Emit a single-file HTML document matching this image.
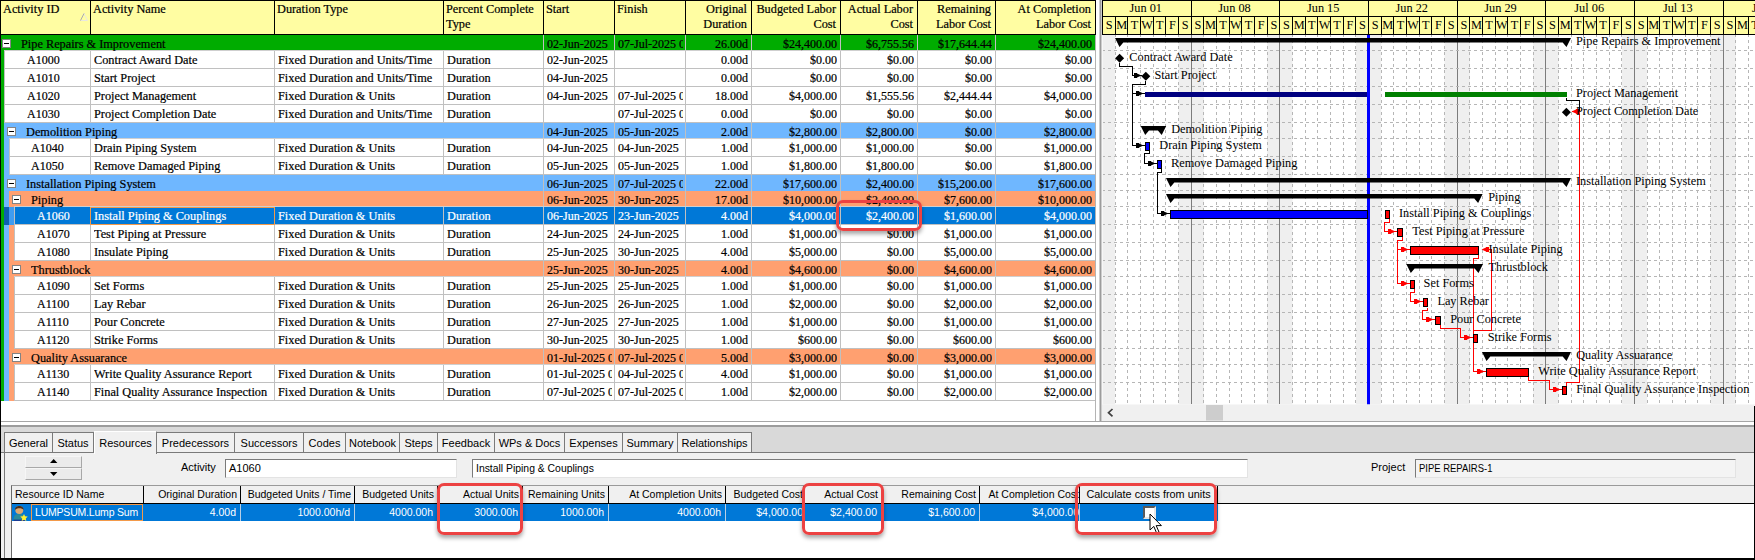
<!DOCTYPE html>
<html><head><meta charset="utf-8"><title>P6 Activities</title>
<style>
html,body{margin:0;padding:0}
body{width:1755px;height:560px;position:relative;overflow:hidden;background:#fff;font-family:"Liberation Serif",serif;font-size:12px;color:#000;-webkit-text-stroke:0.2px currentColor}
div,span{box-sizing:border-box}
.abs,.c,.h,.r,.t,.rc,.rh{position:absolute}
.c{height:17px;line-height:17px;margin-top:1px;white-space:nowrap;overflow:hidden;font-size:12.3px}
.n{font-size:12px}
.h{top:1px;height:33px;line-height:15px;padding-top:1px;white-space:nowrap;overflow:hidden;font-size:12.3px}
.R{text-align:right}
.r{left:0;width:1096px}
.sel .c{color:#fff}
.bx{position:absolute;width:9px;height:9px;background:#fff;border:1px solid #848484}
.bx:after{content:"";position:absolute;left:1px;top:3px;width:5px;height:1px;background:#000}
.sans,.sans *{font-family:"Liberation Sans",sans-serif;font-size:11px}
.t{top:432px;height:20px;line-height:21px;background:#f0f0f0;border:1px solid #7a7a7a;border-bottom:none;text-align:center;white-space:nowrap}
.rh{top:486px;height:17px;line-height:17px;white-space:nowrap;overflow:hidden;border-right:1px solid #000;background:#f0f0f0}
.rc{top:504px;height:17px;line-height:16px;white-space:nowrap;overflow:hidden;color:#fff;text-align:right;border-right:1px solid #b8cfe6}
.red{position:absolute;border:3px solid #ec4242;border-radius:7px;box-shadow:0 3px 4px rgba(0,0,0,.35)}
.inp{position:absolute;height:19px;line-height:17px;border:1px solid;border-color:#7a7a7a #e3e3e3 #e3e3e3 #7a7a7a;background:#fff;padding-left:3px;white-space:nowrap}
</style></head><body>

<div class="abs" style="left:0;top:0;width:1096px;height:35px;background:#000"></div>
<div class="h" style="left:1px;width:89px;background:#fffda2;padding-left:2px">Activity ID</div>
<div class="h" style="left:91px;width:183px;background:#fffda2;padding-left:2px">Activity Name</div>
<div class="h" style="left:275px;width:168px;background:#fffda2;padding-left:2px">Duration Type</div>
<div class="h" style="left:444px;width:99px;background:#fffda2;padding-left:2px">Percent Complete<br>Type</div>
<div class="h" style="left:544px;width:70px;background:#fffda2;padding-left:2px">Start</div>
<div class="h" style="left:615px;width:70px;background:#fffda2;padding-left:2px">Finish</div>
<div class="h R" style="left:686px;width:65px;background:#fffda2;padding-right:4px">Original<br>Duration</div>
<div class="h R" style="left:752px;width:88px;background:#fffda2;padding-right:4px">Budgeted Labor<br>Cost</div>
<div class="h R" style="left:841px;width:76px;background:#fffda2;padding-right:4px">Actual Labor<br>Cost</div>
<div class="h R" style="left:918px;width:77px;background:#fffda2;padding-right:4px">Remaining<br>Labor Cost</div>
<div class="h R" style="left:996px;width:99px;background:#fffda2;padding-right:4px">At Completion<br>Labor Cost</div>
<svg class="abs" style="left:79px;top:12px" width="10" height="10"><path d="M1.5 8.5 L5 1.5 L8.5 8.5 Z" fill="none" stroke="#e8e8e0" stroke-width="1"/><path d="M1.5 8.5 L5 1.5" fill="none" stroke="#b0b0a0" stroke-width="1"/></svg>
<div class="r" style="top:35px;height:16px">
<div class="abs" style="left:1px;top:0;width:1094px;height:16px;background:#00ac00;"></div>
<div class="abs" style="left:543px;top:0;width:1px;height:16px;background:#c0c0c0"></div>
<div class="abs" style="left:614px;top:0;width:1px;height:16px;background:#c0c0c0"></div>
<div class="abs" style="left:685px;top:0;width:1px;height:16px;background:#c0c0c0"></div>
<div class="abs" style="left:751px;top:0;width:1px;height:16px;background:#c0c0c0"></div>
<div class="abs" style="left:840px;top:0;width:1px;height:16px;background:#c0c0c0"></div>
<div class="abs" style="left:917px;top:0;width:1px;height:16px;background:#c0c0c0"></div>
<div class="abs" style="left:995px;top:0;width:1px;height:16px;background:#c0c0c0"></div>
<div class="abs" style="left:4px;top:15px;width:1091px;height:1px;background:#cfcfcf"></div>
<div class="bx" style="left:2px;top:4px"></div>
<div class="c" style="left:21px;top:0;width:500px">Pipe Repairs &amp; Improvement</div>
<div class="c n" style="left:547px;top:0;width:65px">02-Jun-2025</div>
<div class="c n" style="left:618px;top:0;width:65px">07-Jul-2025 0</div>
<div class="c n R" style="left:686px;top:0;width:62px">26.00d</div>
<div class="c n R" style="left:752px;top:0;width:85px">$24,400.00</div>
<div class="c n R" style="left:841px;top:0;width:73px">$6,755.56</div>
<div class="c n R" style="left:918px;top:0;width:74px">$17,644.44</div>
<div class="c n R" style="left:996px;top:0;width:96px">$24,400.00</div>
</div>
<div class="r" style="top:51px;height:18px">
<div class="abs" style="left:1px;top:0;width:3px;height:18px;background:#00ac00"></div>
<div class="abs" style="left:4px;top:0;width:1091px;height:18px;background:#fff;border-left:1px solid #c0c0c0;border-bottom:1px solid #c0c0c0"></div>
<div class="abs" style="left:90px;top:0;width:1px;height:18px;background:#c0c0c0"></div>
<div class="abs" style="left:274px;top:0;width:1px;height:18px;background:#c0c0c0"></div>
<div class="abs" style="left:443px;top:0;width:1px;height:18px;background:#c0c0c0"></div>
<div class="abs" style="left:543px;top:0;width:1px;height:18px;background:#c0c0c0"></div>
<div class="abs" style="left:614px;top:0;width:1px;height:18px;background:#c0c0c0"></div>
<div class="abs" style="left:685px;top:0;width:1px;height:18px;background:#c0c0c0"></div>
<div class="abs" style="left:751px;top:0;width:1px;height:18px;background:#c0c0c0"></div>
<div class="abs" style="left:840px;top:0;width:1px;height:18px;background:#c0c0c0"></div>
<div class="abs" style="left:917px;top:0;width:1px;height:18px;background:#c0c0c0"></div>
<div class="abs" style="left:995px;top:0;width:1px;height:18px;background:#c0c0c0"></div>
<div class="c n" style="left:27px;top:0;width:63px">A1000</div>
<div class="c" style="left:94px;top:0;width:178px">Contract Award Date</div>
<div class="c" style="left:278px;top:0;width:163px">Fixed Duration and Units/Time</div>
<div class="c" style="left:447px;top:0;width:94px">Duration</div>
<div class="c n" style="left:547px;top:0;width:65px">02-Jun-2025</div>
<div class="c n R" style="left:686px;top:0;width:62px">0.00d</div>
<div class="c n R" style="left:752px;top:0;width:85px">$0.00</div>
<div class="c n R" style="left:841px;top:0;width:73px">$0.00</div>
<div class="c n R" style="left:918px;top:0;width:74px">$0.00</div>
<div class="c n R" style="left:996px;top:0;width:96px">$0.00</div>
</div>
<div class="r" style="top:69px;height:18px">
<div class="abs" style="left:1px;top:0;width:3px;height:18px;background:#00ac00"></div>
<div class="abs" style="left:4px;top:0;width:1091px;height:18px;background:#fff;border-left:1px solid #c0c0c0;border-bottom:1px solid #c0c0c0"></div>
<div class="abs" style="left:90px;top:0;width:1px;height:18px;background:#c0c0c0"></div>
<div class="abs" style="left:274px;top:0;width:1px;height:18px;background:#c0c0c0"></div>
<div class="abs" style="left:443px;top:0;width:1px;height:18px;background:#c0c0c0"></div>
<div class="abs" style="left:543px;top:0;width:1px;height:18px;background:#c0c0c0"></div>
<div class="abs" style="left:614px;top:0;width:1px;height:18px;background:#c0c0c0"></div>
<div class="abs" style="left:685px;top:0;width:1px;height:18px;background:#c0c0c0"></div>
<div class="abs" style="left:751px;top:0;width:1px;height:18px;background:#c0c0c0"></div>
<div class="abs" style="left:840px;top:0;width:1px;height:18px;background:#c0c0c0"></div>
<div class="abs" style="left:917px;top:0;width:1px;height:18px;background:#c0c0c0"></div>
<div class="abs" style="left:995px;top:0;width:1px;height:18px;background:#c0c0c0"></div>
<div class="c n" style="left:27px;top:0;width:63px">A1010</div>
<div class="c" style="left:94px;top:0;width:178px">Start Project</div>
<div class="c" style="left:278px;top:0;width:163px">Fixed Duration and Units/Time</div>
<div class="c" style="left:447px;top:0;width:94px">Duration</div>
<div class="c n" style="left:547px;top:0;width:65px">04-Jun-2025</div>
<div class="c n R" style="left:686px;top:0;width:62px">0.00d</div>
<div class="c n R" style="left:752px;top:0;width:85px">$0.00</div>
<div class="c n R" style="left:841px;top:0;width:73px">$0.00</div>
<div class="c n R" style="left:918px;top:0;width:74px">$0.00</div>
<div class="c n R" style="left:996px;top:0;width:96px">$0.00</div>
</div>
<div class="r" style="top:87px;height:18px">
<div class="abs" style="left:1px;top:0;width:3px;height:18px;background:#00ac00"></div>
<div class="abs" style="left:4px;top:0;width:1091px;height:18px;background:#fff;border-left:1px solid #c0c0c0;border-bottom:1px solid #c0c0c0"></div>
<div class="abs" style="left:90px;top:0;width:1px;height:18px;background:#c0c0c0"></div>
<div class="abs" style="left:274px;top:0;width:1px;height:18px;background:#c0c0c0"></div>
<div class="abs" style="left:443px;top:0;width:1px;height:18px;background:#c0c0c0"></div>
<div class="abs" style="left:543px;top:0;width:1px;height:18px;background:#c0c0c0"></div>
<div class="abs" style="left:614px;top:0;width:1px;height:18px;background:#c0c0c0"></div>
<div class="abs" style="left:685px;top:0;width:1px;height:18px;background:#c0c0c0"></div>
<div class="abs" style="left:751px;top:0;width:1px;height:18px;background:#c0c0c0"></div>
<div class="abs" style="left:840px;top:0;width:1px;height:18px;background:#c0c0c0"></div>
<div class="abs" style="left:917px;top:0;width:1px;height:18px;background:#c0c0c0"></div>
<div class="abs" style="left:995px;top:0;width:1px;height:18px;background:#c0c0c0"></div>
<div class="c n" style="left:27px;top:0;width:63px">A1020</div>
<div class="c" style="left:94px;top:0;width:178px">Project Management</div>
<div class="c" style="left:278px;top:0;width:163px">Fixed Duration &amp; Units</div>
<div class="c" style="left:447px;top:0;width:94px">Duration</div>
<div class="c n" style="left:547px;top:0;width:65px">04-Jun-2025</div>
<div class="c n" style="left:618px;top:0;width:65px">07-Jul-2025 0</div>
<div class="c n R" style="left:686px;top:0;width:62px">18.00d</div>
<div class="c n R" style="left:752px;top:0;width:85px">$4,000.00</div>
<div class="c n R" style="left:841px;top:0;width:73px">$1,555.56</div>
<div class="c n R" style="left:918px;top:0;width:74px">$2,444.44</div>
<div class="c n R" style="left:996px;top:0;width:96px">$4,000.00</div>
</div>
<div class="r" style="top:105px;height:18px">
<div class="abs" style="left:1px;top:0;width:3px;height:18px;background:#00ac00"></div>
<div class="abs" style="left:4px;top:0;width:1091px;height:18px;background:#fff;border-left:1px solid #c0c0c0;border-bottom:1px solid #c0c0c0"></div>
<div class="abs" style="left:90px;top:0;width:1px;height:18px;background:#c0c0c0"></div>
<div class="abs" style="left:274px;top:0;width:1px;height:18px;background:#c0c0c0"></div>
<div class="abs" style="left:443px;top:0;width:1px;height:18px;background:#c0c0c0"></div>
<div class="abs" style="left:543px;top:0;width:1px;height:18px;background:#c0c0c0"></div>
<div class="abs" style="left:614px;top:0;width:1px;height:18px;background:#c0c0c0"></div>
<div class="abs" style="left:685px;top:0;width:1px;height:18px;background:#c0c0c0"></div>
<div class="abs" style="left:751px;top:0;width:1px;height:18px;background:#c0c0c0"></div>
<div class="abs" style="left:840px;top:0;width:1px;height:18px;background:#c0c0c0"></div>
<div class="abs" style="left:917px;top:0;width:1px;height:18px;background:#c0c0c0"></div>
<div class="abs" style="left:995px;top:0;width:1px;height:18px;background:#c0c0c0"></div>
<div class="c n" style="left:27px;top:0;width:63px">A1030</div>
<div class="c" style="left:94px;top:0;width:178px">Project Completion Date</div>
<div class="c" style="left:278px;top:0;width:163px">Fixed Duration and Units/Time</div>
<div class="c" style="left:447px;top:0;width:94px">Duration</div>
<div class="c n" style="left:618px;top:0;width:65px">07-Jul-2025 0</div>
<div class="c n R" style="left:686px;top:0;width:62px">0.00d</div>
<div class="c n R" style="left:752px;top:0;width:85px">$0.00</div>
<div class="c n R" style="left:841px;top:0;width:73px">$0.00</div>
<div class="c n R" style="left:918px;top:0;width:74px">$0.00</div>
<div class="c n R" style="left:996px;top:0;width:96px">$0.00</div>
</div>
<div class="r" style="top:123px;height:16px">
<div class="abs" style="left:1px;top:0;width:3px;height:16px;background:#00ac00"></div>
<div class="abs" style="left:4px;top:0;width:1091px;height:16px;background:#6fb7ff;"></div>
<div class="abs" style="left:543px;top:0;width:1px;height:16px;background:#c0c0c0"></div>
<div class="abs" style="left:614px;top:0;width:1px;height:16px;background:#c0c0c0"></div>
<div class="abs" style="left:685px;top:0;width:1px;height:16px;background:#c0c0c0"></div>
<div class="abs" style="left:751px;top:0;width:1px;height:16px;background:#c0c0c0"></div>
<div class="abs" style="left:840px;top:0;width:1px;height:16px;background:#c0c0c0"></div>
<div class="abs" style="left:917px;top:0;width:1px;height:16px;background:#c0c0c0"></div>
<div class="abs" style="left:995px;top:0;width:1px;height:16px;background:#c0c0c0"></div>
<div class="abs" style="left:9px;top:15px;width:1086px;height:1px;background:#cfcfcf"></div>
<div class="bx" style="left:7px;top:4px"></div>
<div class="c" style="left:26px;top:0;width:500px">Demolition Piping</div>
<div class="c n" style="left:547px;top:0;width:65px">04-Jun-2025</div>
<div class="c n" style="left:618px;top:0;width:65px">05-Jun-2025</div>
<div class="c n R" style="left:686px;top:0;width:62px">2.00d</div>
<div class="c n R" style="left:752px;top:0;width:85px">$2,800.00</div>
<div class="c n R" style="left:841px;top:0;width:73px">$2,800.00</div>
<div class="c n R" style="left:918px;top:0;width:74px">$0.00</div>
<div class="c n R" style="left:996px;top:0;width:96px">$2,800.00</div>
</div>
<div class="r" style="top:139px;height:18px">
<div class="abs" style="left:1px;top:0;width:3px;height:18px;background:#00ac00"></div>
<div class="abs" style="left:4px;top:0;width:5px;height:18px;background:#6fb7ff"></div>
<div class="abs" style="left:9px;top:0;width:1086px;height:18px;background:#fff;border-left:1px solid #c0c0c0;border-bottom:1px solid #c0c0c0"></div>
<div class="abs" style="left:90px;top:0;width:1px;height:18px;background:#c0c0c0"></div>
<div class="abs" style="left:274px;top:0;width:1px;height:18px;background:#c0c0c0"></div>
<div class="abs" style="left:443px;top:0;width:1px;height:18px;background:#c0c0c0"></div>
<div class="abs" style="left:543px;top:0;width:1px;height:18px;background:#c0c0c0"></div>
<div class="abs" style="left:614px;top:0;width:1px;height:18px;background:#c0c0c0"></div>
<div class="abs" style="left:685px;top:0;width:1px;height:18px;background:#c0c0c0"></div>
<div class="abs" style="left:751px;top:0;width:1px;height:18px;background:#c0c0c0"></div>
<div class="abs" style="left:840px;top:0;width:1px;height:18px;background:#c0c0c0"></div>
<div class="abs" style="left:917px;top:0;width:1px;height:18px;background:#c0c0c0"></div>
<div class="abs" style="left:995px;top:0;width:1px;height:18px;background:#c0c0c0"></div>
<div class="c n" style="left:31px;top:0;width:59px">A1040</div>
<div class="c" style="left:94px;top:0;width:178px">Drain Piping System</div>
<div class="c" style="left:278px;top:0;width:163px">Fixed Duration &amp; Units</div>
<div class="c" style="left:447px;top:0;width:94px">Duration</div>
<div class="c n" style="left:547px;top:0;width:65px">04-Jun-2025</div>
<div class="c n" style="left:618px;top:0;width:65px">04-Jun-2025</div>
<div class="c n R" style="left:686px;top:0;width:62px">1.00d</div>
<div class="c n R" style="left:752px;top:0;width:85px">$1,000.00</div>
<div class="c n R" style="left:841px;top:0;width:73px">$1,000.00</div>
<div class="c n R" style="left:918px;top:0;width:74px">$0.00</div>
<div class="c n R" style="left:996px;top:0;width:96px">$1,000.00</div>
</div>
<div class="r" style="top:157px;height:18px">
<div class="abs" style="left:1px;top:0;width:3px;height:18px;background:#00ac00"></div>
<div class="abs" style="left:4px;top:0;width:5px;height:18px;background:#6fb7ff"></div>
<div class="abs" style="left:9px;top:0;width:1086px;height:18px;background:#fff;border-left:1px solid #c0c0c0;border-bottom:1px solid #c0c0c0"></div>
<div class="abs" style="left:90px;top:0;width:1px;height:18px;background:#c0c0c0"></div>
<div class="abs" style="left:274px;top:0;width:1px;height:18px;background:#c0c0c0"></div>
<div class="abs" style="left:443px;top:0;width:1px;height:18px;background:#c0c0c0"></div>
<div class="abs" style="left:543px;top:0;width:1px;height:18px;background:#c0c0c0"></div>
<div class="abs" style="left:614px;top:0;width:1px;height:18px;background:#c0c0c0"></div>
<div class="abs" style="left:685px;top:0;width:1px;height:18px;background:#c0c0c0"></div>
<div class="abs" style="left:751px;top:0;width:1px;height:18px;background:#c0c0c0"></div>
<div class="abs" style="left:840px;top:0;width:1px;height:18px;background:#c0c0c0"></div>
<div class="abs" style="left:917px;top:0;width:1px;height:18px;background:#c0c0c0"></div>
<div class="abs" style="left:995px;top:0;width:1px;height:18px;background:#c0c0c0"></div>
<div class="c n" style="left:31px;top:0;width:59px">A1050</div>
<div class="c" style="left:94px;top:0;width:178px">Remove Damaged Piping</div>
<div class="c" style="left:278px;top:0;width:163px">Fixed Duration &amp; Units</div>
<div class="c" style="left:447px;top:0;width:94px">Duration</div>
<div class="c n" style="left:547px;top:0;width:65px">05-Jun-2025</div>
<div class="c n" style="left:618px;top:0;width:65px">05-Jun-2025</div>
<div class="c n R" style="left:686px;top:0;width:62px">1.00d</div>
<div class="c n R" style="left:752px;top:0;width:85px">$1,800.00</div>
<div class="c n R" style="left:841px;top:0;width:73px">$1,800.00</div>
<div class="c n R" style="left:918px;top:0;width:74px">$0.00</div>
<div class="c n R" style="left:996px;top:0;width:96px">$1,800.00</div>
</div>
<div class="r" style="top:175px;height:16px">
<div class="abs" style="left:1px;top:0;width:3px;height:16px;background:#00ac00"></div>
<div class="abs" style="left:4px;top:0;width:1091px;height:16px;background:#6fb7ff;"></div>
<div class="abs" style="left:543px;top:0;width:1px;height:16px;background:#c0c0c0"></div>
<div class="abs" style="left:614px;top:0;width:1px;height:16px;background:#c0c0c0"></div>
<div class="abs" style="left:685px;top:0;width:1px;height:16px;background:#c0c0c0"></div>
<div class="abs" style="left:751px;top:0;width:1px;height:16px;background:#c0c0c0"></div>
<div class="abs" style="left:840px;top:0;width:1px;height:16px;background:#c0c0c0"></div>
<div class="abs" style="left:917px;top:0;width:1px;height:16px;background:#c0c0c0"></div>
<div class="abs" style="left:995px;top:0;width:1px;height:16px;background:#c0c0c0"></div>
<div class="bx" style="left:7px;top:4px"></div>
<div class="c" style="left:26px;top:0;width:500px">Installation Piping System</div>
<div class="c n" style="left:547px;top:0;width:65px">06-Jun-2025</div>
<div class="c n" style="left:618px;top:0;width:65px">07-Jul-2025 0</div>
<div class="c n R" style="left:686px;top:0;width:62px">22.00d</div>
<div class="c n R" style="left:752px;top:0;width:85px">$17,600.00</div>
<div class="c n R" style="left:841px;top:0;width:73px">$2,400.00</div>
<div class="c n R" style="left:918px;top:0;width:74px">$15,200.00</div>
<div class="c n R" style="left:996px;top:0;width:96px">$17,600.00</div>
</div>
<div class="r" style="top:191px;height:16px">
<div class="abs" style="left:1px;top:0;width:3px;height:16px;background:#00ac00"></div>
<div class="abs" style="left:4px;top:0;width:5px;height:16px;background:#6fb7ff"></div>
<div class="abs" style="left:9px;top:0;width:1086px;height:16px;background:#ffa070;"></div>
<div class="abs" style="left:543px;top:0;width:1px;height:16px;background:#c0c0c0"></div>
<div class="abs" style="left:614px;top:0;width:1px;height:16px;background:#c0c0c0"></div>
<div class="abs" style="left:685px;top:0;width:1px;height:16px;background:#c0c0c0"></div>
<div class="abs" style="left:751px;top:0;width:1px;height:16px;background:#c0c0c0"></div>
<div class="abs" style="left:840px;top:0;width:1px;height:16px;background:#c0c0c0"></div>
<div class="abs" style="left:917px;top:0;width:1px;height:16px;background:#c0c0c0"></div>
<div class="abs" style="left:995px;top:0;width:1px;height:16px;background:#c0c0c0"></div>
<div class="abs" style="left:14px;top:15px;width:1081px;height:1px;background:#cfcfcf"></div>
<div class="bx" style="left:12px;top:4px"></div>
<div class="c" style="left:31px;top:0;width:500px">Piping</div>
<div class="c n" style="left:547px;top:0;width:65px">06-Jun-2025</div>
<div class="c n" style="left:618px;top:0;width:65px">30-Jun-2025</div>
<div class="c n R" style="left:686px;top:0;width:62px">17.00d</div>
<div class="c n R" style="left:752px;top:0;width:85px">$10,000.00</div>
<div class="c n R" style="left:841px;top:0;width:73px">$2,400.00</div>
<div class="c n R" style="left:918px;top:0;width:74px">$7,600.00</div>
<div class="c n R" style="left:996px;top:0;width:96px">$10,000.00</div>
</div>
<div class="r sel" style="top:207px;height:18px">
<div class="abs" style="left:1px;top:0;width:3px;height:18px;background:#00ac00"></div>
<div class="abs" style="left:4px;top:0;width:5px;height:18px;background:#0e5fb0"></div>
<div class="abs" style="left:9px;top:0;width:5px;height:18px;background:#3f9cf0"></div>
<div class="abs" style="left:14px;top:0;width:1081px;height:18px;background:#0078d7;border-left:1px solid #c0c0c0;border-bottom:1px solid #c0c0c0"></div>
<div class="abs" style="left:90px;top:0;width:1px;height:18px;background:#c0c0c0"></div>
<div class="abs" style="left:274px;top:0;width:1px;height:18px;background:#c0c0c0"></div>
<div class="abs" style="left:443px;top:0;width:1px;height:18px;background:#c0c0c0"></div>
<div class="abs" style="left:543px;top:0;width:1px;height:18px;background:#c0c0c0"></div>
<div class="abs" style="left:614px;top:0;width:1px;height:18px;background:#c0c0c0"></div>
<div class="abs" style="left:685px;top:0;width:1px;height:18px;background:#c0c0c0"></div>
<div class="abs" style="left:751px;top:0;width:1px;height:18px;background:#c0c0c0"></div>
<div class="abs" style="left:840px;top:0;width:1px;height:18px;background:#c0c0c0"></div>
<div class="abs" style="left:917px;top:0;width:1px;height:18px;background:#c0c0c0"></div>
<div class="abs" style="left:995px;top:0;width:1px;height:18px;background:#c0c0c0"></div>
<div class="c n" style="left:37px;top:0;width:53px">A1060</div>
<div class="c" style="left:94px;top:0;width:178px">Install Piping &amp; Couplings</div>
<div class="c" style="left:278px;top:0;width:163px">Fixed Duration &amp; Units</div>
<div class="c" style="left:447px;top:0;width:94px">Duration</div>
<div class="c n" style="left:547px;top:0;width:65px">06-Jun-2025</div>
<div class="c n" style="left:618px;top:0;width:65px">23-Jun-2025</div>
<div class="c n R" style="left:686px;top:0;width:62px">4.00d</div>
<div class="c n R" style="left:752px;top:0;width:85px">$4,000.00</div>
<div class="c n R" style="left:841px;top:0;width:73px">$2,400.00</div>
<div class="c n R" style="left:918px;top:0;width:74px">$1,600.00</div>
<div class="c n R" style="left:996px;top:0;width:96px">$4,000.00</div>
<div class="abs" style="left:90px;top:0;width:185px;height:18px;border:1px solid #f39a4a"></div>
</div>
<div class="r" style="top:225px;height:18px">
<div class="abs" style="left:1px;top:0;width:3px;height:18px;background:#00ac00"></div>
<div class="abs" style="left:4px;top:0;width:5px;height:18px;background:#6fb7ff"></div>
<div class="abs" style="left:9px;top:0;width:5px;height:18px;background:#ffa070"></div>
<div class="abs" style="left:14px;top:0;width:1081px;height:18px;background:#fff;border-left:1px solid #c0c0c0;border-bottom:1px solid #c0c0c0"></div>
<div class="abs" style="left:90px;top:0;width:1px;height:18px;background:#c0c0c0"></div>
<div class="abs" style="left:274px;top:0;width:1px;height:18px;background:#c0c0c0"></div>
<div class="abs" style="left:443px;top:0;width:1px;height:18px;background:#c0c0c0"></div>
<div class="abs" style="left:543px;top:0;width:1px;height:18px;background:#c0c0c0"></div>
<div class="abs" style="left:614px;top:0;width:1px;height:18px;background:#c0c0c0"></div>
<div class="abs" style="left:685px;top:0;width:1px;height:18px;background:#c0c0c0"></div>
<div class="abs" style="left:751px;top:0;width:1px;height:18px;background:#c0c0c0"></div>
<div class="abs" style="left:840px;top:0;width:1px;height:18px;background:#c0c0c0"></div>
<div class="abs" style="left:917px;top:0;width:1px;height:18px;background:#c0c0c0"></div>
<div class="abs" style="left:995px;top:0;width:1px;height:18px;background:#c0c0c0"></div>
<div class="c n" style="left:37px;top:0;width:53px">A1070</div>
<div class="c" style="left:94px;top:0;width:178px">Test Piping at Pressure</div>
<div class="c" style="left:278px;top:0;width:163px">Fixed Duration &amp; Units</div>
<div class="c" style="left:447px;top:0;width:94px">Duration</div>
<div class="c n" style="left:547px;top:0;width:65px">24-Jun-2025</div>
<div class="c n" style="left:618px;top:0;width:65px">24-Jun-2025</div>
<div class="c n R" style="left:686px;top:0;width:62px">1.00d</div>
<div class="c n R" style="left:752px;top:0;width:85px">$1,000.00</div>
<div class="c n R" style="left:841px;top:0;width:73px">$0.00</div>
<div class="c n R" style="left:918px;top:0;width:74px">$1,000.00</div>
<div class="c n R" style="left:996px;top:0;width:96px">$1,000.00</div>
</div>
<div class="r" style="top:243px;height:18px">
<div class="abs" style="left:1px;top:0;width:3px;height:18px;background:#00ac00"></div>
<div class="abs" style="left:4px;top:0;width:5px;height:18px;background:#6fb7ff"></div>
<div class="abs" style="left:9px;top:0;width:5px;height:18px;background:#ffa070"></div>
<div class="abs" style="left:14px;top:0;width:1081px;height:18px;background:#fff;border-left:1px solid #c0c0c0;border-bottom:1px solid #c0c0c0"></div>
<div class="abs" style="left:90px;top:0;width:1px;height:18px;background:#c0c0c0"></div>
<div class="abs" style="left:274px;top:0;width:1px;height:18px;background:#c0c0c0"></div>
<div class="abs" style="left:443px;top:0;width:1px;height:18px;background:#c0c0c0"></div>
<div class="abs" style="left:543px;top:0;width:1px;height:18px;background:#c0c0c0"></div>
<div class="abs" style="left:614px;top:0;width:1px;height:18px;background:#c0c0c0"></div>
<div class="abs" style="left:685px;top:0;width:1px;height:18px;background:#c0c0c0"></div>
<div class="abs" style="left:751px;top:0;width:1px;height:18px;background:#c0c0c0"></div>
<div class="abs" style="left:840px;top:0;width:1px;height:18px;background:#c0c0c0"></div>
<div class="abs" style="left:917px;top:0;width:1px;height:18px;background:#c0c0c0"></div>
<div class="abs" style="left:995px;top:0;width:1px;height:18px;background:#c0c0c0"></div>
<div class="c n" style="left:37px;top:0;width:53px">A1080</div>
<div class="c" style="left:94px;top:0;width:178px">Insulate Piping</div>
<div class="c" style="left:278px;top:0;width:163px">Fixed Duration &amp; Units</div>
<div class="c" style="left:447px;top:0;width:94px">Duration</div>
<div class="c n" style="left:547px;top:0;width:65px">25-Jun-2025</div>
<div class="c n" style="left:618px;top:0;width:65px">30-Jun-2025</div>
<div class="c n R" style="left:686px;top:0;width:62px">4.00d</div>
<div class="c n R" style="left:752px;top:0;width:85px">$5,000.00</div>
<div class="c n R" style="left:841px;top:0;width:73px">$0.00</div>
<div class="c n R" style="left:918px;top:0;width:74px">$5,000.00</div>
<div class="c n R" style="left:996px;top:0;width:96px">$5,000.00</div>
</div>
<div class="r" style="top:261px;height:16px">
<div class="abs" style="left:1px;top:0;width:3px;height:16px;background:#00ac00"></div>
<div class="abs" style="left:4px;top:0;width:5px;height:16px;background:#6fb7ff"></div>
<div class="abs" style="left:9px;top:0;width:1086px;height:16px;background:#ffa070;"></div>
<div class="abs" style="left:543px;top:0;width:1px;height:16px;background:#c0c0c0"></div>
<div class="abs" style="left:614px;top:0;width:1px;height:16px;background:#c0c0c0"></div>
<div class="abs" style="left:685px;top:0;width:1px;height:16px;background:#c0c0c0"></div>
<div class="abs" style="left:751px;top:0;width:1px;height:16px;background:#c0c0c0"></div>
<div class="abs" style="left:840px;top:0;width:1px;height:16px;background:#c0c0c0"></div>
<div class="abs" style="left:917px;top:0;width:1px;height:16px;background:#c0c0c0"></div>
<div class="abs" style="left:995px;top:0;width:1px;height:16px;background:#c0c0c0"></div>
<div class="abs" style="left:14px;top:15px;width:1081px;height:1px;background:#cfcfcf"></div>
<div class="bx" style="left:12px;top:4px"></div>
<div class="c" style="left:31px;top:0;width:500px">Thrustblock</div>
<div class="c n" style="left:547px;top:0;width:65px">25-Jun-2025</div>
<div class="c n" style="left:618px;top:0;width:65px">30-Jun-2025</div>
<div class="c n R" style="left:686px;top:0;width:62px">4.00d</div>
<div class="c n R" style="left:752px;top:0;width:85px">$4,600.00</div>
<div class="c n R" style="left:841px;top:0;width:73px">$0.00</div>
<div class="c n R" style="left:918px;top:0;width:74px">$4,600.00</div>
<div class="c n R" style="left:996px;top:0;width:96px">$4,600.00</div>
</div>
<div class="r" style="top:277px;height:18px">
<div class="abs" style="left:1px;top:0;width:3px;height:18px;background:#00ac00"></div>
<div class="abs" style="left:4px;top:0;width:5px;height:18px;background:#6fb7ff"></div>
<div class="abs" style="left:9px;top:0;width:5px;height:18px;background:#ffa070"></div>
<div class="abs" style="left:14px;top:0;width:1081px;height:18px;background:#fff;border-left:1px solid #c0c0c0;border-bottom:1px solid #c0c0c0"></div>
<div class="abs" style="left:90px;top:0;width:1px;height:18px;background:#c0c0c0"></div>
<div class="abs" style="left:274px;top:0;width:1px;height:18px;background:#c0c0c0"></div>
<div class="abs" style="left:443px;top:0;width:1px;height:18px;background:#c0c0c0"></div>
<div class="abs" style="left:543px;top:0;width:1px;height:18px;background:#c0c0c0"></div>
<div class="abs" style="left:614px;top:0;width:1px;height:18px;background:#c0c0c0"></div>
<div class="abs" style="left:685px;top:0;width:1px;height:18px;background:#c0c0c0"></div>
<div class="abs" style="left:751px;top:0;width:1px;height:18px;background:#c0c0c0"></div>
<div class="abs" style="left:840px;top:0;width:1px;height:18px;background:#c0c0c0"></div>
<div class="abs" style="left:917px;top:0;width:1px;height:18px;background:#c0c0c0"></div>
<div class="abs" style="left:995px;top:0;width:1px;height:18px;background:#c0c0c0"></div>
<div class="c n" style="left:37px;top:0;width:53px">A1090</div>
<div class="c" style="left:94px;top:0;width:178px">Set Forms</div>
<div class="c" style="left:278px;top:0;width:163px">Fixed Duration &amp; Units</div>
<div class="c" style="left:447px;top:0;width:94px">Duration</div>
<div class="c n" style="left:547px;top:0;width:65px">25-Jun-2025</div>
<div class="c n" style="left:618px;top:0;width:65px">25-Jun-2025</div>
<div class="c n R" style="left:686px;top:0;width:62px">1.00d</div>
<div class="c n R" style="left:752px;top:0;width:85px">$1,000.00</div>
<div class="c n R" style="left:841px;top:0;width:73px">$0.00</div>
<div class="c n R" style="left:918px;top:0;width:74px">$1,000.00</div>
<div class="c n R" style="left:996px;top:0;width:96px">$1,000.00</div>
</div>
<div class="r" style="top:295px;height:18px">
<div class="abs" style="left:1px;top:0;width:3px;height:18px;background:#00ac00"></div>
<div class="abs" style="left:4px;top:0;width:5px;height:18px;background:#6fb7ff"></div>
<div class="abs" style="left:9px;top:0;width:5px;height:18px;background:#ffa070"></div>
<div class="abs" style="left:14px;top:0;width:1081px;height:18px;background:#fff;border-left:1px solid #c0c0c0;border-bottom:1px solid #c0c0c0"></div>
<div class="abs" style="left:90px;top:0;width:1px;height:18px;background:#c0c0c0"></div>
<div class="abs" style="left:274px;top:0;width:1px;height:18px;background:#c0c0c0"></div>
<div class="abs" style="left:443px;top:0;width:1px;height:18px;background:#c0c0c0"></div>
<div class="abs" style="left:543px;top:0;width:1px;height:18px;background:#c0c0c0"></div>
<div class="abs" style="left:614px;top:0;width:1px;height:18px;background:#c0c0c0"></div>
<div class="abs" style="left:685px;top:0;width:1px;height:18px;background:#c0c0c0"></div>
<div class="abs" style="left:751px;top:0;width:1px;height:18px;background:#c0c0c0"></div>
<div class="abs" style="left:840px;top:0;width:1px;height:18px;background:#c0c0c0"></div>
<div class="abs" style="left:917px;top:0;width:1px;height:18px;background:#c0c0c0"></div>
<div class="abs" style="left:995px;top:0;width:1px;height:18px;background:#c0c0c0"></div>
<div class="c n" style="left:37px;top:0;width:53px">A1100</div>
<div class="c" style="left:94px;top:0;width:178px">Lay Rebar</div>
<div class="c" style="left:278px;top:0;width:163px">Fixed Duration &amp; Units</div>
<div class="c" style="left:447px;top:0;width:94px">Duration</div>
<div class="c n" style="left:547px;top:0;width:65px">26-Jun-2025</div>
<div class="c n" style="left:618px;top:0;width:65px">26-Jun-2025</div>
<div class="c n R" style="left:686px;top:0;width:62px">1.00d</div>
<div class="c n R" style="left:752px;top:0;width:85px">$2,000.00</div>
<div class="c n R" style="left:841px;top:0;width:73px">$0.00</div>
<div class="c n R" style="left:918px;top:0;width:74px">$2,000.00</div>
<div class="c n R" style="left:996px;top:0;width:96px">$2,000.00</div>
</div>
<div class="r" style="top:313px;height:18px">
<div class="abs" style="left:1px;top:0;width:3px;height:18px;background:#00ac00"></div>
<div class="abs" style="left:4px;top:0;width:5px;height:18px;background:#6fb7ff"></div>
<div class="abs" style="left:9px;top:0;width:5px;height:18px;background:#ffa070"></div>
<div class="abs" style="left:14px;top:0;width:1081px;height:18px;background:#fff;border-left:1px solid #c0c0c0;border-bottom:1px solid #c0c0c0"></div>
<div class="abs" style="left:90px;top:0;width:1px;height:18px;background:#c0c0c0"></div>
<div class="abs" style="left:274px;top:0;width:1px;height:18px;background:#c0c0c0"></div>
<div class="abs" style="left:443px;top:0;width:1px;height:18px;background:#c0c0c0"></div>
<div class="abs" style="left:543px;top:0;width:1px;height:18px;background:#c0c0c0"></div>
<div class="abs" style="left:614px;top:0;width:1px;height:18px;background:#c0c0c0"></div>
<div class="abs" style="left:685px;top:0;width:1px;height:18px;background:#c0c0c0"></div>
<div class="abs" style="left:751px;top:0;width:1px;height:18px;background:#c0c0c0"></div>
<div class="abs" style="left:840px;top:0;width:1px;height:18px;background:#c0c0c0"></div>
<div class="abs" style="left:917px;top:0;width:1px;height:18px;background:#c0c0c0"></div>
<div class="abs" style="left:995px;top:0;width:1px;height:18px;background:#c0c0c0"></div>
<div class="c n" style="left:37px;top:0;width:53px">A1110</div>
<div class="c" style="left:94px;top:0;width:178px">Pour Concrete</div>
<div class="c" style="left:278px;top:0;width:163px">Fixed Duration &amp; Units</div>
<div class="c" style="left:447px;top:0;width:94px">Duration</div>
<div class="c n" style="left:547px;top:0;width:65px">27-Jun-2025</div>
<div class="c n" style="left:618px;top:0;width:65px">27-Jun-2025</div>
<div class="c n R" style="left:686px;top:0;width:62px">1.00d</div>
<div class="c n R" style="left:752px;top:0;width:85px">$1,000.00</div>
<div class="c n R" style="left:841px;top:0;width:73px">$0.00</div>
<div class="c n R" style="left:918px;top:0;width:74px">$1,000.00</div>
<div class="c n R" style="left:996px;top:0;width:96px">$1,000.00</div>
</div>
<div class="r" style="top:331px;height:18px">
<div class="abs" style="left:1px;top:0;width:3px;height:18px;background:#00ac00"></div>
<div class="abs" style="left:4px;top:0;width:5px;height:18px;background:#6fb7ff"></div>
<div class="abs" style="left:9px;top:0;width:5px;height:18px;background:#ffa070"></div>
<div class="abs" style="left:14px;top:0;width:1081px;height:18px;background:#fff;border-left:1px solid #c0c0c0;border-bottom:1px solid #c0c0c0"></div>
<div class="abs" style="left:90px;top:0;width:1px;height:18px;background:#c0c0c0"></div>
<div class="abs" style="left:274px;top:0;width:1px;height:18px;background:#c0c0c0"></div>
<div class="abs" style="left:443px;top:0;width:1px;height:18px;background:#c0c0c0"></div>
<div class="abs" style="left:543px;top:0;width:1px;height:18px;background:#c0c0c0"></div>
<div class="abs" style="left:614px;top:0;width:1px;height:18px;background:#c0c0c0"></div>
<div class="abs" style="left:685px;top:0;width:1px;height:18px;background:#c0c0c0"></div>
<div class="abs" style="left:751px;top:0;width:1px;height:18px;background:#c0c0c0"></div>
<div class="abs" style="left:840px;top:0;width:1px;height:18px;background:#c0c0c0"></div>
<div class="abs" style="left:917px;top:0;width:1px;height:18px;background:#c0c0c0"></div>
<div class="abs" style="left:995px;top:0;width:1px;height:18px;background:#c0c0c0"></div>
<div class="c n" style="left:37px;top:0;width:53px">A1120</div>
<div class="c" style="left:94px;top:0;width:178px">Strike Forms</div>
<div class="c" style="left:278px;top:0;width:163px">Fixed Duration &amp; Units</div>
<div class="c" style="left:447px;top:0;width:94px">Duration</div>
<div class="c n" style="left:547px;top:0;width:65px">30-Jun-2025</div>
<div class="c n" style="left:618px;top:0;width:65px">30-Jun-2025</div>
<div class="c n R" style="left:686px;top:0;width:62px">1.00d</div>
<div class="c n R" style="left:752px;top:0;width:85px">$600.00</div>
<div class="c n R" style="left:841px;top:0;width:73px">$0.00</div>
<div class="c n R" style="left:918px;top:0;width:74px">$600.00</div>
<div class="c n R" style="left:996px;top:0;width:96px">$600.00</div>
</div>
<div class="r" style="top:349px;height:16px">
<div class="abs" style="left:1px;top:0;width:3px;height:16px;background:#00ac00"></div>
<div class="abs" style="left:4px;top:0;width:5px;height:16px;background:#6fb7ff"></div>
<div class="abs" style="left:9px;top:0;width:1086px;height:16px;background:#ffa070;"></div>
<div class="abs" style="left:543px;top:0;width:1px;height:16px;background:#c0c0c0"></div>
<div class="abs" style="left:614px;top:0;width:1px;height:16px;background:#c0c0c0"></div>
<div class="abs" style="left:685px;top:0;width:1px;height:16px;background:#c0c0c0"></div>
<div class="abs" style="left:751px;top:0;width:1px;height:16px;background:#c0c0c0"></div>
<div class="abs" style="left:840px;top:0;width:1px;height:16px;background:#c0c0c0"></div>
<div class="abs" style="left:917px;top:0;width:1px;height:16px;background:#c0c0c0"></div>
<div class="abs" style="left:995px;top:0;width:1px;height:16px;background:#c0c0c0"></div>
<div class="abs" style="left:14px;top:15px;width:1081px;height:1px;background:#cfcfcf"></div>
<div class="bx" style="left:12px;top:4px"></div>
<div class="c" style="left:31px;top:0;width:500px">Quality Assuarance</div>
<div class="c n" style="left:547px;top:0;width:65px">01-Jul-2025 0</div>
<div class="c n" style="left:618px;top:0;width:65px">07-Jul-2025 0</div>
<div class="c n R" style="left:686px;top:0;width:62px">5.00d</div>
<div class="c n R" style="left:752px;top:0;width:85px">$3,000.00</div>
<div class="c n R" style="left:841px;top:0;width:73px">$0.00</div>
<div class="c n R" style="left:918px;top:0;width:74px">$3,000.00</div>
<div class="c n R" style="left:996px;top:0;width:96px">$3,000.00</div>
</div>
<div class="r" style="top:365px;height:18px">
<div class="abs" style="left:1px;top:0;width:3px;height:18px;background:#00ac00"></div>
<div class="abs" style="left:4px;top:0;width:5px;height:18px;background:#6fb7ff"></div>
<div class="abs" style="left:9px;top:0;width:5px;height:18px;background:#ffa070"></div>
<div class="abs" style="left:14px;top:0;width:1081px;height:18px;background:#fff;border-left:1px solid #c0c0c0;border-bottom:1px solid #c0c0c0"></div>
<div class="abs" style="left:90px;top:0;width:1px;height:18px;background:#c0c0c0"></div>
<div class="abs" style="left:274px;top:0;width:1px;height:18px;background:#c0c0c0"></div>
<div class="abs" style="left:443px;top:0;width:1px;height:18px;background:#c0c0c0"></div>
<div class="abs" style="left:543px;top:0;width:1px;height:18px;background:#c0c0c0"></div>
<div class="abs" style="left:614px;top:0;width:1px;height:18px;background:#c0c0c0"></div>
<div class="abs" style="left:685px;top:0;width:1px;height:18px;background:#c0c0c0"></div>
<div class="abs" style="left:751px;top:0;width:1px;height:18px;background:#c0c0c0"></div>
<div class="abs" style="left:840px;top:0;width:1px;height:18px;background:#c0c0c0"></div>
<div class="abs" style="left:917px;top:0;width:1px;height:18px;background:#c0c0c0"></div>
<div class="abs" style="left:995px;top:0;width:1px;height:18px;background:#c0c0c0"></div>
<div class="c n" style="left:37px;top:0;width:53px">A1130</div>
<div class="c" style="left:94px;top:0;width:178px">Write Quality Assurance Report</div>
<div class="c" style="left:278px;top:0;width:163px">Fixed Duration &amp; Units</div>
<div class="c" style="left:447px;top:0;width:94px">Duration</div>
<div class="c n" style="left:547px;top:0;width:65px">01-Jul-2025 0</div>
<div class="c n" style="left:618px;top:0;width:65px">04-Jul-2025 0</div>
<div class="c n R" style="left:686px;top:0;width:62px">4.00d</div>
<div class="c n R" style="left:752px;top:0;width:85px">$1,000.00</div>
<div class="c n R" style="left:841px;top:0;width:73px">$0.00</div>
<div class="c n R" style="left:918px;top:0;width:74px">$1,000.00</div>
<div class="c n R" style="left:996px;top:0;width:96px">$1,000.00</div>
</div>
<div class="r" style="top:383px;height:18px">
<div class="abs" style="left:1px;top:0;width:3px;height:18px;background:#00ac00"></div>
<div class="abs" style="left:4px;top:0;width:5px;height:18px;background:#6fb7ff"></div>
<div class="abs" style="left:9px;top:0;width:5px;height:18px;background:#ffa070"></div>
<div class="abs" style="left:14px;top:0;width:1081px;height:18px;background:#fff;border-left:1px solid #c0c0c0;border-bottom:1px solid #c0c0c0"></div>
<div class="abs" style="left:90px;top:0;width:1px;height:18px;background:#c0c0c0"></div>
<div class="abs" style="left:274px;top:0;width:1px;height:18px;background:#c0c0c0"></div>
<div class="abs" style="left:443px;top:0;width:1px;height:18px;background:#c0c0c0"></div>
<div class="abs" style="left:543px;top:0;width:1px;height:18px;background:#c0c0c0"></div>
<div class="abs" style="left:614px;top:0;width:1px;height:18px;background:#c0c0c0"></div>
<div class="abs" style="left:685px;top:0;width:1px;height:18px;background:#c0c0c0"></div>
<div class="abs" style="left:751px;top:0;width:1px;height:18px;background:#c0c0c0"></div>
<div class="abs" style="left:840px;top:0;width:1px;height:18px;background:#c0c0c0"></div>
<div class="abs" style="left:917px;top:0;width:1px;height:18px;background:#c0c0c0"></div>
<div class="abs" style="left:995px;top:0;width:1px;height:18px;background:#c0c0c0"></div>
<div class="c n" style="left:37px;top:0;width:53px">A1140</div>
<div class="c" style="left:94px;top:0;width:178px">Final Quality Assurance Inspection</div>
<div class="c" style="left:278px;top:0;width:163px">Fixed Duration &amp; Units</div>
<div class="c" style="left:447px;top:0;width:94px">Duration</div>
<div class="c n" style="left:547px;top:0;width:65px">07-Jul-2025 0</div>
<div class="c n" style="left:618px;top:0;width:65px">07-Jul-2025 0</div>
<div class="c n R" style="left:686px;top:0;width:62px">1.00d</div>
<div class="c n R" style="left:752px;top:0;width:85px">$2,000.00</div>
<div class="c n R" style="left:841px;top:0;width:73px">$0.00</div>
<div class="c n R" style="left:918px;top:0;width:74px">$2,000.00</div>
<div class="c n R" style="left:996px;top:0;width:96px">$2,000.00</div>
</div>
<div class="abs" style="left:1095px;top:35px;width:1px;height:386px;background:#b4b4b4"></div>
<div class="abs" style="left:0;top:0;width:1px;height:560px;background:#000"></div><svg class="abs" style="left:1097px;top:0" width="658" height="421" viewBox="0 0 658 421" font-family="'Liberation Serif',serif" font-size="12.3" style="-webkit-text-stroke:0.2px #000">
<rect x="0" y="0" width="6" height="421" fill="#fff"/>
<rect x="2.5" y="0" width="2" height="421" fill="#9c9c9c"/>
<rect x="5.0" y="0" width="653.0" height="35" fill="#000"/>
<rect x="6.0" y="1" width="652.5" height="15" fill="#fffda2" shape-rendering="crispEdges"/>
<rect x="6.0" y="17" width="652.5" height="17" fill="#fffda2" shape-rendering="crispEdges"/>
<rect x="5.0" y="35" width="653.0" height="369.5" fill="#fff"/>
<rect x="5.50" y="35" width="12.67" height="369.5" fill="#efefef"/>
<rect x="81.50" y="35" width="12.67" height="369.5" fill="#efefef"/>
<rect x="94.17" y="35" width="12.67" height="369.5" fill="#efefef"/>
<rect x="170.17" y="35" width="12.67" height="369.5" fill="#efefef"/>
<rect x="182.83" y="35" width="12.67" height="369.5" fill="#efefef"/>
<rect x="258.83" y="35" width="12.67" height="369.5" fill="#efefef"/>
<rect x="271.50" y="35" width="12.67" height="369.5" fill="#efefef"/>
<rect x="347.50" y="35" width="12.67" height="369.5" fill="#efefef"/>
<rect x="360.17" y="35" width="12.67" height="369.5" fill="#efefef"/>
<rect x="436.17" y="35" width="12.67" height="369.5" fill="#efefef"/>
<rect x="448.83" y="35" width="12.67" height="369.5" fill="#efefef"/>
<rect x="524.83" y="35" width="12.67" height="369.5" fill="#efefef"/>
<rect x="537.50" y="35" width="12.67" height="369.5" fill="#efefef"/>
<rect x="613.50" y="35" width="12.67" height="369.5" fill="#efefef"/>
<rect x="626.17" y="35" width="12.67" height="369.5" fill="#efefef"/>
<text x="48.8" y="12.4" text-anchor="middle">Jun 01</text>
<rect x="94" y="0" width="1" height="17" fill="#000" shape-rendering="crispEdges"/>
<text x="137.5" y="12.4" text-anchor="middle">Jun 08</text>
<rect x="182" y="0" width="1" height="17" fill="#000" shape-rendering="crispEdges"/>
<text x="226.2" y="12.4" text-anchor="middle">Jun 15</text>
<rect x="271" y="0" width="1" height="17" fill="#000" shape-rendering="crispEdges"/>
<text x="314.8" y="12.4" text-anchor="middle">Jun 22</text>
<rect x="360" y="0" width="1" height="17" fill="#000" shape-rendering="crispEdges"/>
<text x="403.5" y="12.4" text-anchor="middle">Jun 29</text>
<rect x="448" y="0" width="1" height="17" fill="#000" shape-rendering="crispEdges"/>
<text x="492.2" y="12.4" text-anchor="middle">Jul 06</text>
<rect x="537" y="0" width="1" height="17" fill="#000" shape-rendering="crispEdges"/>
<text x="580.8" y="12.4" text-anchor="middle">Jul 13</text>
<rect x="626" y="0" width="1" height="17" fill="#000" shape-rendering="crispEdges"/>
<text x="669.5" y="12.4" text-anchor="middle">Jul 20</text>
<text x="12.1" y="29.4" text-anchor="middle">S</text>
<rect x="18" y="17" width="1" height="17" fill="#000" shape-rendering="crispEdges"/>
<text x="24.8" y="29.4" text-anchor="middle">M</text>
<rect x="30" y="17" width="1" height="17" fill="#000" shape-rendering="crispEdges"/>
<text x="37.5" y="29.4" text-anchor="middle">T</text>
<rect x="43" y="17" width="1" height="17" fill="#000" shape-rendering="crispEdges"/>
<text x="50.1" y="29.4" text-anchor="middle">W</text>
<rect x="56" y="17" width="1" height="17" fill="#000" shape-rendering="crispEdges"/>
<text x="62.8" y="29.4" text-anchor="middle">T</text>
<rect x="68" y="17" width="1" height="17" fill="#000" shape-rendering="crispEdges"/>
<text x="75.5" y="29.4" text-anchor="middle">F</text>
<rect x="81" y="17" width="1" height="17" fill="#000" shape-rendering="crispEdges"/>
<text x="88.1" y="29.4" text-anchor="middle">S</text>
<rect x="94" y="17" width="1" height="17" fill="#000" shape-rendering="crispEdges"/>
<text x="100.8" y="29.4" text-anchor="middle">S</text>
<rect x="106" y="17" width="1" height="17" fill="#000" shape-rendering="crispEdges"/>
<text x="113.5" y="29.4" text-anchor="middle">M</text>
<rect x="119" y="17" width="1" height="17" fill="#000" shape-rendering="crispEdges"/>
<text x="126.1" y="29.4" text-anchor="middle">T</text>
<rect x="132" y="17" width="1" height="17" fill="#000" shape-rendering="crispEdges"/>
<text x="138.8" y="29.4" text-anchor="middle">W</text>
<rect x="144" y="17" width="1" height="17" fill="#000" shape-rendering="crispEdges"/>
<text x="151.5" y="29.4" text-anchor="middle">T</text>
<rect x="157" y="17" width="1" height="17" fill="#000" shape-rendering="crispEdges"/>
<text x="164.1" y="29.4" text-anchor="middle">F</text>
<rect x="170" y="17" width="1" height="17" fill="#000" shape-rendering="crispEdges"/>
<text x="176.8" y="29.4" text-anchor="middle">S</text>
<rect x="182" y="17" width="1" height="17" fill="#000" shape-rendering="crispEdges"/>
<text x="189.5" y="29.4" text-anchor="middle">S</text>
<rect x="195" y="17" width="1" height="17" fill="#000" shape-rendering="crispEdges"/>
<text x="202.1" y="29.4" text-anchor="middle">M</text>
<rect x="208" y="17" width="1" height="17" fill="#000" shape-rendering="crispEdges"/>
<text x="214.8" y="29.4" text-anchor="middle">T</text>
<rect x="220" y="17" width="1" height="17" fill="#000" shape-rendering="crispEdges"/>
<text x="227.5" y="29.4" text-anchor="middle">W</text>
<rect x="233" y="17" width="1" height="17" fill="#000" shape-rendering="crispEdges"/>
<text x="240.1" y="29.4" text-anchor="middle">T</text>
<rect x="246" y="17" width="1" height="17" fill="#000" shape-rendering="crispEdges"/>
<text x="252.8" y="29.4" text-anchor="middle">F</text>
<rect x="258" y="17" width="1" height="17" fill="#000" shape-rendering="crispEdges"/>
<text x="265.5" y="29.4" text-anchor="middle">S</text>
<rect x="271" y="17" width="1" height="17" fill="#000" shape-rendering="crispEdges"/>
<text x="278.1" y="29.4" text-anchor="middle">S</text>
<rect x="284" y="17" width="1" height="17" fill="#000" shape-rendering="crispEdges"/>
<text x="290.8" y="29.4" text-anchor="middle">M</text>
<rect x="296" y="17" width="1" height="17" fill="#000" shape-rendering="crispEdges"/>
<text x="303.5" y="29.4" text-anchor="middle">T</text>
<rect x="309" y="17" width="1" height="17" fill="#000" shape-rendering="crispEdges"/>
<text x="316.1" y="29.4" text-anchor="middle">W</text>
<rect x="322" y="17" width="1" height="17" fill="#000" shape-rendering="crispEdges"/>
<text x="328.8" y="29.4" text-anchor="middle">T</text>
<rect x="334" y="17" width="1" height="17" fill="#000" shape-rendering="crispEdges"/>
<text x="341.5" y="29.4" text-anchor="middle">F</text>
<rect x="347" y="17" width="1" height="17" fill="#000" shape-rendering="crispEdges"/>
<text x="354.1" y="29.4" text-anchor="middle">S</text>
<rect x="360" y="17" width="1" height="17" fill="#000" shape-rendering="crispEdges"/>
<text x="366.8" y="29.4" text-anchor="middle">S</text>
<rect x="372" y="17" width="1" height="17" fill="#000" shape-rendering="crispEdges"/>
<text x="379.5" y="29.4" text-anchor="middle">M</text>
<rect x="385" y="17" width="1" height="17" fill="#000" shape-rendering="crispEdges"/>
<text x="392.1" y="29.4" text-anchor="middle">T</text>
<rect x="398" y="17" width="1" height="17" fill="#000" shape-rendering="crispEdges"/>
<text x="404.8" y="29.4" text-anchor="middle">W</text>
<rect x="410" y="17" width="1" height="17" fill="#000" shape-rendering="crispEdges"/>
<text x="417.5" y="29.4" text-anchor="middle">T</text>
<rect x="423" y="17" width="1" height="17" fill="#000" shape-rendering="crispEdges"/>
<text x="430.1" y="29.4" text-anchor="middle">F</text>
<rect x="436" y="17" width="1" height="17" fill="#000" shape-rendering="crispEdges"/>
<text x="442.8" y="29.4" text-anchor="middle">S</text>
<rect x="448" y="17" width="1" height="17" fill="#000" shape-rendering="crispEdges"/>
<text x="455.5" y="29.4" text-anchor="middle">S</text>
<rect x="461" y="17" width="1" height="17" fill="#000" shape-rendering="crispEdges"/>
<text x="468.1" y="29.4" text-anchor="middle">M</text>
<rect x="474" y="17" width="1" height="17" fill="#000" shape-rendering="crispEdges"/>
<text x="480.8" y="29.4" text-anchor="middle">T</text>
<rect x="486" y="17" width="1" height="17" fill="#000" shape-rendering="crispEdges"/>
<text x="493.5" y="29.4" text-anchor="middle">W</text>
<rect x="499" y="17" width="1" height="17" fill="#000" shape-rendering="crispEdges"/>
<text x="506.1" y="29.4" text-anchor="middle">T</text>
<rect x="512" y="17" width="1" height="17" fill="#000" shape-rendering="crispEdges"/>
<text x="518.8" y="29.4" text-anchor="middle">F</text>
<rect x="524" y="17" width="1" height="17" fill="#000" shape-rendering="crispEdges"/>
<text x="531.5" y="29.4" text-anchor="middle">S</text>
<rect x="537" y="17" width="1" height="17" fill="#000" shape-rendering="crispEdges"/>
<text x="544.1" y="29.4" text-anchor="middle">S</text>
<rect x="550" y="17" width="1" height="17" fill="#000" shape-rendering="crispEdges"/>
<text x="556.8" y="29.4" text-anchor="middle">M</text>
<rect x="562" y="17" width="1" height="17" fill="#000" shape-rendering="crispEdges"/>
<text x="569.5" y="29.4" text-anchor="middle">T</text>
<rect x="575" y="17" width="1" height="17" fill="#000" shape-rendering="crispEdges"/>
<text x="582.1" y="29.4" text-anchor="middle">W</text>
<rect x="588" y="17" width="1" height="17" fill="#000" shape-rendering="crispEdges"/>
<text x="594.8" y="29.4" text-anchor="middle">T</text>
<rect x="600" y="17" width="1" height="17" fill="#000" shape-rendering="crispEdges"/>
<text x="607.5" y="29.4" text-anchor="middle">F</text>
<rect x="613" y="17" width="1" height="17" fill="#000" shape-rendering="crispEdges"/>
<text x="620.1" y="29.4" text-anchor="middle">S</text>
<rect x="626" y="17" width="1" height="17" fill="#000" shape-rendering="crispEdges"/>
<text x="632.8" y="29.4" text-anchor="middle">S</text>
<rect x="638" y="17" width="1" height="17" fill="#000" shape-rendering="crispEdges"/>
<text x="645.5" y="29.4" text-anchor="middle">M</text>
<rect x="651" y="17" width="1" height="17" fill="#000" shape-rendering="crispEdges"/>
<text x="658.1" y="29.4" text-anchor="middle">T</text>
<rect x="664" y="17" width="1" height="17" fill="#000" shape-rendering="crispEdges"/>
<text x="670.8" y="29.4" text-anchor="middle">W</text>
<g shape-rendering="crispEdges">
<line x1="18.5" y1="35" x2="18.5" y2="404" stroke="#b6b6b6" stroke-width="1" stroke-dasharray="3 3" stroke-dashoffset="1"/>
<line x1="30.5" y1="35" x2="30.5" y2="404" stroke="#b6b6b6" stroke-width="1" stroke-dasharray="3 3" stroke-dashoffset="1"/>
<line x1="43.5" y1="35" x2="43.5" y2="404" stroke="#b6b6b6" stroke-width="1" stroke-dasharray="3 3" stroke-dashoffset="1"/>
<line x1="56.5" y1="35" x2="56.5" y2="404" stroke="#b6b6b6" stroke-width="1" stroke-dasharray="3 3" stroke-dashoffset="1"/>
<line x1="68.5" y1="35" x2="68.5" y2="404" stroke="#b6b6b6" stroke-width="1" stroke-dasharray="3 3" stroke-dashoffset="1"/>
<line x1="81.5" y1="35" x2="81.5" y2="404" stroke="#b6b6b6" stroke-width="1" stroke-dasharray="3 3" stroke-dashoffset="1"/>
<rect x="94" y="35" width="1" height="369" fill="#7c7c7c"/>
<line x1="106.5" y1="35" x2="106.5" y2="404" stroke="#b6b6b6" stroke-width="1" stroke-dasharray="3 3" stroke-dashoffset="1"/>
<line x1="119.5" y1="35" x2="119.5" y2="404" stroke="#b6b6b6" stroke-width="1" stroke-dasharray="3 3" stroke-dashoffset="1"/>
<line x1="132.5" y1="35" x2="132.5" y2="404" stroke="#b6b6b6" stroke-width="1" stroke-dasharray="3 3" stroke-dashoffset="1"/>
<line x1="144.5" y1="35" x2="144.5" y2="404" stroke="#b6b6b6" stroke-width="1" stroke-dasharray="3 3" stroke-dashoffset="1"/>
<line x1="157.5" y1="35" x2="157.5" y2="404" stroke="#b6b6b6" stroke-width="1" stroke-dasharray="3 3" stroke-dashoffset="1"/>
<line x1="170.5" y1="35" x2="170.5" y2="404" stroke="#b6b6b6" stroke-width="1" stroke-dasharray="3 3" stroke-dashoffset="1"/>
<rect x="182" y="35" width="1" height="369" fill="#7c7c7c"/>
<line x1="195.5" y1="35" x2="195.5" y2="404" stroke="#b6b6b6" stroke-width="1" stroke-dasharray="3 3" stroke-dashoffset="1"/>
<line x1="208.5" y1="35" x2="208.5" y2="404" stroke="#b6b6b6" stroke-width="1" stroke-dasharray="3 3" stroke-dashoffset="1"/>
<line x1="220.5" y1="35" x2="220.5" y2="404" stroke="#b6b6b6" stroke-width="1" stroke-dasharray="3 3" stroke-dashoffset="1"/>
<line x1="233.5" y1="35" x2="233.5" y2="404" stroke="#b6b6b6" stroke-width="1" stroke-dasharray="3 3" stroke-dashoffset="1"/>
<line x1="246.5" y1="35" x2="246.5" y2="404" stroke="#b6b6b6" stroke-width="1" stroke-dasharray="3 3" stroke-dashoffset="1"/>
<line x1="258.5" y1="35" x2="258.5" y2="404" stroke="#b6b6b6" stroke-width="1" stroke-dasharray="3 3" stroke-dashoffset="1"/>
<rect x="271" y="35" width="1" height="369" fill="#7c7c7c"/>
<line x1="284.5" y1="35" x2="284.5" y2="404" stroke="#b6b6b6" stroke-width="1" stroke-dasharray="3 3" stroke-dashoffset="1"/>
<line x1="296.5" y1="35" x2="296.5" y2="404" stroke="#b6b6b6" stroke-width="1" stroke-dasharray="3 3" stroke-dashoffset="1"/>
<line x1="309.5" y1="35" x2="309.5" y2="404" stroke="#b6b6b6" stroke-width="1" stroke-dasharray="3 3" stroke-dashoffset="1"/>
<line x1="322.5" y1="35" x2="322.5" y2="404" stroke="#b6b6b6" stroke-width="1" stroke-dasharray="3 3" stroke-dashoffset="1"/>
<line x1="334.5" y1="35" x2="334.5" y2="404" stroke="#b6b6b6" stroke-width="1" stroke-dasharray="3 3" stroke-dashoffset="1"/>
<line x1="347.5" y1="35" x2="347.5" y2="404" stroke="#b6b6b6" stroke-width="1" stroke-dasharray="3 3" stroke-dashoffset="1"/>
<rect x="360" y="35" width="1" height="369" fill="#7c7c7c"/>
<line x1="372.5" y1="35" x2="372.5" y2="404" stroke="#b6b6b6" stroke-width="1" stroke-dasharray="3 3" stroke-dashoffset="1"/>
<line x1="385.5" y1="35" x2="385.5" y2="404" stroke="#b6b6b6" stroke-width="1" stroke-dasharray="3 3" stroke-dashoffset="1"/>
<line x1="398.5" y1="35" x2="398.5" y2="404" stroke="#b6b6b6" stroke-width="1" stroke-dasharray="3 3" stroke-dashoffset="1"/>
<line x1="410.5" y1="35" x2="410.5" y2="404" stroke="#b6b6b6" stroke-width="1" stroke-dasharray="3 3" stroke-dashoffset="1"/>
<line x1="423.5" y1="35" x2="423.5" y2="404" stroke="#b6b6b6" stroke-width="1" stroke-dasharray="3 3" stroke-dashoffset="1"/>
<line x1="436.5" y1="35" x2="436.5" y2="404" stroke="#b6b6b6" stroke-width="1" stroke-dasharray="3 3" stroke-dashoffset="1"/>
<rect x="448" y="35" width="1" height="369" fill="#7c7c7c"/>
<line x1="461.5" y1="35" x2="461.5" y2="404" stroke="#b6b6b6" stroke-width="1" stroke-dasharray="3 3" stroke-dashoffset="1"/>
<line x1="474.5" y1="35" x2="474.5" y2="404" stroke="#b6b6b6" stroke-width="1" stroke-dasharray="3 3" stroke-dashoffset="1"/>
<line x1="486.5" y1="35" x2="486.5" y2="404" stroke="#b6b6b6" stroke-width="1" stroke-dasharray="3 3" stroke-dashoffset="1"/>
<line x1="499.5" y1="35" x2="499.5" y2="404" stroke="#b6b6b6" stroke-width="1" stroke-dasharray="3 3" stroke-dashoffset="1"/>
<line x1="512.5" y1="35" x2="512.5" y2="404" stroke="#b6b6b6" stroke-width="1" stroke-dasharray="3 3" stroke-dashoffset="1"/>
<line x1="524.5" y1="35" x2="524.5" y2="404" stroke="#b6b6b6" stroke-width="1" stroke-dasharray="3 3" stroke-dashoffset="1"/>
<rect x="537" y="35" width="1" height="369" fill="#7c7c7c"/>
<line x1="550.5" y1="35" x2="550.5" y2="404" stroke="#b6b6b6" stroke-width="1" stroke-dasharray="3 3" stroke-dashoffset="1"/>
<line x1="562.5" y1="35" x2="562.5" y2="404" stroke="#b6b6b6" stroke-width="1" stroke-dasharray="3 3" stroke-dashoffset="1"/>
<line x1="575.5" y1="35" x2="575.5" y2="404" stroke="#b6b6b6" stroke-width="1" stroke-dasharray="3 3" stroke-dashoffset="1"/>
<line x1="588.5" y1="35" x2="588.5" y2="404" stroke="#b6b6b6" stroke-width="1" stroke-dasharray="3 3" stroke-dashoffset="1"/>
<line x1="600.5" y1="35" x2="600.5" y2="404" stroke="#b6b6b6" stroke-width="1" stroke-dasharray="3 3" stroke-dashoffset="1"/>
<line x1="613.5" y1="35" x2="613.5" y2="404" stroke="#b6b6b6" stroke-width="1" stroke-dasharray="3 3" stroke-dashoffset="1"/>
<rect x="626" y="35" width="1" height="369" fill="#7c7c7c"/>
<line x1="638.5" y1="35" x2="638.5" y2="404" stroke="#b6b6b6" stroke-width="1" stroke-dasharray="3 3" stroke-dashoffset="1"/>
<line x1="651.5" y1="35" x2="651.5" y2="404" stroke="#b6b6b6" stroke-width="1" stroke-dasharray="3 3" stroke-dashoffset="1"/>
<line x1="664.5" y1="35" x2="664.5" y2="404" stroke="#b6b6b6" stroke-width="1" stroke-dasharray="3 3" stroke-dashoffset="1"/>
<line x1="5.5" y1="50.5" x2="658" y2="50.5" stroke="#b6b6b6" stroke-width="1" stroke-dasharray="3 3" stroke-dashoffset="1"/>
<line x1="5.5" y1="68.5" x2="658" y2="68.5" stroke="#b6b6b6" stroke-width="1" stroke-dasharray="3 3" stroke-dashoffset="1"/>
<line x1="5.5" y1="86.5" x2="658" y2="86.5" stroke="#b6b6b6" stroke-width="1" stroke-dasharray="3 3" stroke-dashoffset="1"/>
<line x1="5.5" y1="104.5" x2="658" y2="104.5" stroke="#b6b6b6" stroke-width="1" stroke-dasharray="3 3" stroke-dashoffset="1"/>
<line x1="5.5" y1="122.5" x2="658" y2="122.5" stroke="#b6b6b6" stroke-width="1" stroke-dasharray="3 3" stroke-dashoffset="1"/>
<line x1="5.5" y1="138.5" x2="658" y2="138.5" stroke="#b6b6b6" stroke-width="1" stroke-dasharray="3 3" stroke-dashoffset="1"/>
<line x1="5.5" y1="156.5" x2="658" y2="156.5" stroke="#b6b6b6" stroke-width="1" stroke-dasharray="3 3" stroke-dashoffset="1"/>
<line x1="5.5" y1="174.5" x2="658" y2="174.5" stroke="#b6b6b6" stroke-width="1" stroke-dasharray="3 3" stroke-dashoffset="1"/>
<line x1="5.5" y1="190.5" x2="658" y2="190.5" stroke="#b6b6b6" stroke-width="1" stroke-dasharray="3 3" stroke-dashoffset="1"/>
<line x1="5.5" y1="206.5" x2="658" y2="206.5" stroke="#b6b6b6" stroke-width="1" stroke-dasharray="3 3" stroke-dashoffset="1"/>
<line x1="5.5" y1="224.5" x2="658" y2="224.5" stroke="#b6b6b6" stroke-width="1" stroke-dasharray="3 3" stroke-dashoffset="1"/>
<line x1="5.5" y1="242.5" x2="658" y2="242.5" stroke="#b6b6b6" stroke-width="1" stroke-dasharray="3 3" stroke-dashoffset="1"/>
<line x1="5.5" y1="260.5" x2="658" y2="260.5" stroke="#b6b6b6" stroke-width="1" stroke-dasharray="3 3" stroke-dashoffset="1"/>
<line x1="5.5" y1="276.5" x2="658" y2="276.5" stroke="#b6b6b6" stroke-width="1" stroke-dasharray="3 3" stroke-dashoffset="1"/>
<line x1="5.5" y1="294.5" x2="658" y2="294.5" stroke="#b6b6b6" stroke-width="1" stroke-dasharray="3 3" stroke-dashoffset="1"/>
<line x1="5.5" y1="312.5" x2="658" y2="312.5" stroke="#b6b6b6" stroke-width="1" stroke-dasharray="3 3" stroke-dashoffset="1"/>
<line x1="5.5" y1="330.5" x2="658" y2="330.5" stroke="#b6b6b6" stroke-width="1" stroke-dasharray="3 3" stroke-dashoffset="1"/>
<line x1="5.5" y1="348.5" x2="658" y2="348.5" stroke="#b6b6b6" stroke-width="1" stroke-dasharray="3 3" stroke-dashoffset="1"/>
<line x1="5.5" y1="364.5" x2="658" y2="364.5" stroke="#b6b6b6" stroke-width="1" stroke-dasharray="3 3" stroke-dashoffset="1"/>
<line x1="5.5" y1="382.5" x2="658" y2="382.5" stroke="#b6b6b6" stroke-width="1" stroke-dasharray="3 3" stroke-dashoffset="1"/>
</g>
<rect x="270" y="35" width="3" height="369.5" fill="#0000ff"/>
<path d="M22.5 62.5 L22.5 66.5 L35.5 66.5 L35.5 75.5 L44.5 75.5" fill="none" stroke="#000" stroke-width="1" shape-rendering="crispEdges"/>
<path d="M48.5 80.5 L48.5 84.5 L35.5 84.5 L35.5 145.5 L48.5 145.5" fill="none" stroke="#000" stroke-width="1" shape-rendering="crispEdges"/>
<path d="M35.5 93.5 L47.5 93.5" fill="none" stroke="#000" stroke-width="1" shape-rendering="crispEdges"/>
<path d="M52.5 150.5 L52.5 153.5 L47.5 153.5 L47.5 163.5 L60.5 163.5" fill="none" stroke="#000" stroke-width="1" shape-rendering="crispEdges"/>
<path d="M64.5 168.5 L64.5 172.5 L60.5 172.5 L60.5 213.5 L73.5 213.5" fill="none" stroke="#000" stroke-width="1" shape-rendering="crispEdges"/>
<path d="M469.5 97.5 L469.5 100.5 L482.5 100.5 L482.5 111.5" fill="none" stroke="#000" stroke-width="1" shape-rendering="crispEdges"/>
<path d="M482.5 111.5 L482.5 382.5 L469.5 382.5 L469.5 386.5" fill="none" stroke="#ff0000" stroke-width="1" shape-rendering="crispEdges"/>
<path d="M482.5 111.5 L474.5 111.5" fill="none" stroke="#ff0000" stroke-width="1" shape-rendering="crispEdges"/>
<path d="M292.5 218.5 L292.5 222.5 L287.5 222.5 L287.5 231.5 L300.5 231.5" fill="none" stroke="#ff0000" stroke-width="1" shape-rendering="crispEdges"/>
<path d="M305.5 236.5 L305.5 240.5 L300.5 240.5 L300.5 283.5 L313.5 283.5" fill="none" stroke="#ff0000" stroke-width="1" shape-rendering="crispEdges"/>
<path d="M300.5 249.5 L313.5 249.5" fill="none" stroke="#ff0000" stroke-width="1" shape-rendering="crispEdges"/>
<path d="M317.5 288.5 L317.5 292.5 L313.5 292.5 L313.5 301.5 L326.5 301.5" fill="none" stroke="#ff0000" stroke-width="1" shape-rendering="crispEdges"/>
<path d="M330.5 307.5 L330.5 310.5 L325.5 310.5 L325.5 319.5 L338.5 319.5" fill="none" stroke="#ff0000" stroke-width="1" shape-rendering="crispEdges"/>
<path d="M343.5 324.5 L343.5 328.5 L363.5 328.5 L363.5 337.5 L376.5 337.5" fill="none" stroke="#ff0000" stroke-width="1" shape-rendering="crispEdges"/>
<path d="M381.5 254.5 L381.5 258.5 L376.5 258.5 L376.5 371.5 L389.5 371.5" fill="none" stroke="#ff0000" stroke-width="1" shape-rendering="crispEdges"/>
<path d="M376.5 330.5 L394.5 330.5 L394.5 249.5 L385.5 249.5" fill="none" stroke="#ff0000" stroke-width="1" shape-rendering="crispEdges"/>
<path d="M431.5 376.5 L431.5 380.5 L452.5 380.5 L452.5 389.5 L465.5 389.5" fill="none" stroke="#ff0000" stroke-width="1" shape-rendering="crispEdges"/>
<path d="M18.0 38 H474.0 L469.5 47 L465.7 42.4 H26.3 L22.5 47 Z" fill="#000"/>
<text x="479.0" y="44.6">Pipe Repairs &amp; Improvement</text>
<path d="M18.09999999999991 58.2 L22.59999999999991 53.7 L27.09999999999991 58.2 L22.59999999999991 62.7 Z" fill="#000"/>
<text x="32.3" y="60.6">Contract Award Date</text>
<path d="M44.299999999999955 76.2 L48.799999999999955 71.7 L53.299999999999955 76.2 L48.799999999999955 80.7 Z" fill="#000"/>
<path d="M37 73.0 H40 V73.5 L44.5 75.5 L40 77.5 V78.0 H37 Z" fill="#000"/>
<text x="57.5" y="78.6">Start Project</text>
<rect x="48.0" y="92" width="222.0" height="5" fill="#000080" shape-rendering="crispEdges"/>
<rect x="288.0" y="92" width="182.0" height="5" fill="#008000" shape-rendering="crispEdges"/>
<path d="M39 91.0 H42 V91.5 L46.5 93.5 L42 95.5 V96.0 H39 Z" fill="#000"/>
<text x="479.0" y="96.6">Project Management</text>
<path d="M464.9000000000001 112.3 L469.4000000000001 107.8 L473.9000000000001 112.3 L469.4000000000001 116.8 Z" fill="#000"/>
<path d="M482 109.0 H479 V109.5 L474.5 111.5 L479 113.5 V114.0 H482 Z" fill="#ff0000"/>
<text x="479.0" y="114.6">Project Completion Date</text>
<path d="M43.7 126 H69.2 L64.7 135 L60.9 130.4 H52.0 L48.2 135 Z" fill="#000"/>
<text x="74.2" y="132.6">Demolition Piping</text>
<g shape-rendering="crispEdges"><rect x="48" y="142" width="5" height="9" fill="#000"/><rect x="49" y="143" width="3" height="7" fill="#0000ff"/></g>
<path d="M39 143.0 H42 V143.5 L46.5 145.5 L42 147.5 V148.0 H39 Z" fill="#000"/>
<text x="62.3" y="148.6">Drain Piping System</text>
<g shape-rendering="crispEdges"><rect x="60" y="160" width="5" height="9" fill="#000"/><rect x="61" y="161" width="3" height="7" fill="#0000ff"/></g>
<path d="M51 161.0 H54 V161.5 L58.5 163.5 L54 165.5 V166.0 H51 Z" fill="#000"/>
<text x="74.0" y="166.6">Remove Damaged Piping</text>
<path d="M69.0 178 H474.0 L469.5 187 L465.7 182.4 H77.3 L73.5 187 Z" fill="#000"/>
<text x="479.0" y="184.6">Installation Piping System</text>
<path d="M69.0 194 H385.6 L381.1 203 L377.3 198.4 H77.3 L73.5 203 Z" fill="#000"/>
<text x="391.2" y="200.6">Piping</text>
<g shape-rendering="crispEdges"><rect x="73" y="210" width="198" height="9" fill="#000"/><rect x="74" y="211" width="196" height="7" fill="#0000ff"/></g>
<path d="M64 211.0 H67 V211.5 L71.5 213.5 L67 215.5 V216.0 H64 Z" fill="#000"/>
<g shape-rendering="crispEdges"><rect x="288" y="210" width="5" height="9" fill="#000"/><rect x="289" y="211" width="3" height="7" fill="#ff0000"/></g>
<text x="302.0" y="216.6">Install Piping &amp; Couplings</text>
<g shape-rendering="crispEdges"><rect x="300" y="228" width="6" height="9" fill="#000"/><rect x="301" y="229" width="4" height="7" fill="#ff0000"/></g>
<path d="M291 229.0 H294 V229.5 L298.5 231.5 L294 233.5 V234.0 H291 Z" fill="#ff0000"/>
<text x="315.3" y="234.6">Test Piping at Pressure</text>
<g shape-rendering="crispEdges"><rect x="313" y="246" width="69" height="9" fill="#000"/><rect x="314" y="247" width="67" height="7" fill="#ff0000"/></g>
<path d="M304 247.0 H307 V247.5 L311.5 249.5 L307 251.5 V252.0 H304 Z" fill="#ff0000"/>
<path d="M392 247.0 H389 V247.5 L384.5 249.5 L389 251.5 V252.0 H392 Z" fill="#ff0000"/>
<text x="391.5" y="252.6">Insulate Piping</text>
<path d="M309.3 264 H386.0 L381.5 273 L377.7 268.4 H317.6 L313.8 273 Z" fill="#000"/>
<text x="391.5" y="270.6">Thrustblock</text>
<g shape-rendering="crispEdges"><rect x="313" y="280" width="5" height="9" fill="#000"/><rect x="314" y="281" width="3" height="7" fill="#ff0000"/></g>
<path d="M304 281.0 H307 V281.5 L311.5 283.5 L307 285.5 V286.0 H304 Z" fill="#ff0000"/>
<text x="326.6" y="286.6">Set Forms</text>
<g shape-rendering="crispEdges"><rect x="326" y="298" width="5" height="9" fill="#000"/><rect x="327" y="299" width="3" height="7" fill="#ff0000"/></g>
<path d="M317 299.0 H320 V299.5 L324.5 301.5 L320 303.5 V304.0 H317 Z" fill="#ff0000"/>
<text x="340.4" y="304.6">Lay Rebar</text>
<g shape-rendering="crispEdges"><rect x="338" y="316" width="6" height="9" fill="#000"/><rect x="339" y="317" width="4" height="7" fill="#ff0000"/></g>
<path d="M329 317.0 H332 V317.5 L336.5 319.5 L332 321.5 V322.0 H329 Z" fill="#ff0000"/>
<text x="353.2" y="322.6">Pour Concrete</text>
<g shape-rendering="crispEdges"><rect x="376" y="334" width="5" height="9" fill="#000"/><rect x="377" y="335" width="3" height="7" fill="#ff0000"/></g>
<path d="M367 335.0 H370 V335.5 L374.5 337.5 L370 339.5 V340.0 H367 Z" fill="#ff0000"/>
<text x="390.7" y="340.6">Strike Forms</text>
<path d="M385.0 352 H474.0 L469.5 361 L465.7 356.4 H393.3 L389.5 361 Z" fill="#000"/>
<text x="479.2" y="358.6">Quality Assuarance</text>
<g shape-rendering="crispEdges"><rect x="389" y="368" width="43" height="9" fill="#000"/><rect x="390" y="369" width="41" height="7" fill="#ff0000"/></g>
<path d="M380 369.0 H383 V369.5 L387.5 371.5 L383 373.5 V374.0 H380 Z" fill="#ff0000"/>
<text x="441.3" y="374.6">Write Quality Assurance Report</text>
<g shape-rendering="crispEdges"><rect x="465" y="386" width="5" height="9" fill="#000"/><rect x="466" y="387" width="3" height="7" fill="#ff0000"/></g>
<path d="M456 387.0 H459 V387.5 L463.5 389.5 L459 391.5 V392.0 H456 Z" fill="#ff0000"/>
<text x="479.2" y="392.6">Final Quality Assurance Inspection</text>
<rect x="5.0" y="404.5" width="653.0" height="16.5" fill="#f0f0f0"/>
<rect x="109" y="405" width="17" height="15.5" fill="#cdcdcd"/>
<path d="M15.5 409 L11.5 412.7 L15.5 416.4" fill="none" stroke="#404040" stroke-width="1.7"/>
</svg><style>.rh,.rc{font-size:10.5px !important}.sans,.sans *{-webkit-text-stroke:0}</style><div class="sans">
<div class="abs" style="left:1px;top:421px;width:1753px;height:1px;background:#a6a6a6"></div>
<div class="abs" style="left:1px;top:422px;width:1753px;height:3px;background:#fff"></div>
<div class="abs" style="left:1px;top:425px;width:1753px;height:2px;background:#9c9c9c"></div>
<div class="abs" style="left:1px;top:427px;width:1753px;height:26px;background:#d9d9d9"></div>
<div class="abs" style="left:1px;top:453px;width:1753px;height:107px;background:#f0f0f0"></div>
<div class="abs" style="left:1px;top:452px;width:1753px;height:1px;background:#7a7a7a"></div>
<div class="abs" style="left:4px;top:432px;width:1px;height:128px;background:#7a7a7a"></div>
<div class="t" style="left:4px;width:49px">General</div>
<div class="t" style="left:52px;width:42px">Status</div>
<div class="t" style="left:94px;width:63px;top:431px;height:23px;line-height:22px;border-top-color:#fff;border-left-color:#fff;z-index:2">Resources</div>
<div class="t" style="left:156px;width:79px">Predecessors</div>
<div class="t" style="left:234px;width:70px">Successors</div>
<div class="t" style="left:303px;width:43px">Codes</div>
<div class="t" style="left:345px;width:55px">Notebook</div>
<div class="t" style="left:399px;width:39px">Steps</div>
<div class="t" style="left:437px;width:58px">Feedback</div>
<div class="t" style="left:494px;width:71px">WPs &amp; Docs</div>
<div class="t" style="left:564px;width:59px">Expenses</div>
<div class="t" style="left:622px;width:56px">Summary</div>
<div class="t" style="left:677px;width:75px">Relationships</div>
<div class="abs" style="left:25px;top:456px;width:57px;height:12px;background:#ebebeb;border:1px solid;border-color:#f6f6f6 #a8a8a8 #a8a8a8 #f6f6f6"></div>
<div class="abs" style="left:25px;top:468px;width:57px;height:12px;background:#ebebeb;border:1px solid;border-color:#f6f6f6 #a8a8a8 #a8a8a8 #f6f6f6"></div>
<svg class="abs" style="left:49px;top:458px" width="10" height="20"><path d="M1 5 L4.7 1 L8.4 5 Z M1 14 L4.7 18 L8.4 14 Z" fill="#000"/></svg>
<div class="abs" style="left:181px;top:460px;line-height:14px">Activity</div>
<div class="inp" style="left:225px;top:459px;width:232px">A1060</div>
<div class="inp" style="left:472px;top:459px;width:776px;font-size:10.4px">Install Piping &amp; Couplings</div>
<div class="abs" style="left:1371px;top:460px;line-height:14px">Project</div>
<div class="inp" style="left:1415px;top:459px;width:321px;background:#f4f4f4;"><span style="display:inline-block;transform-origin:0 50%;transform:scaleX(.86)">PIPE REPAIRS-1</span></div>
<div class="abs" style="left:11px;top:485px;width:1743px;height:74px;background:#fff;border-left:1px solid #696969;border-top:1px solid #9a9a9a"></div>
<div class="abs" style="left:12px;top:486px;width:1742px;height:17px;background:#f0f0f0"></div>
<div class="abs" style="left:12px;top:503px;width:1742px;height:1px;background:#000"></div>
<div class="abs" style="left:12px;top:504px;width:1206px;height:17px;background:#0078d7"></div>
<div class="rh" style="left:12px;width:132px;padding-left:3px">Resource ID Name</div>
<div class="rc" style="left:31px;width:112px;border:1px solid #f39a4a;text-align:left;padding-left:3px;line-height:15px;letter-spacing:-0.2px">LUMPSUM.Lump Sum</div>
<div class="rh R" style="left:144px;width:97px;padding-right:3px;direction:rtl">Original Duration</div>
<div class="rc" style="left:144px;width:97px;padding-right:4px;direction:rtl">4.00d</div>
<div class="rh R" style="left:241px;width:114px;padding-right:3px;direction:rtl">Budgeted Units / Time</div>
<div class="rc" style="left:241px;width:114px;padding-right:4px;direction:rtl">1000.00h/d</div>
<div class="rh R" style="left:355px;width:83px;padding-right:3px;direction:rtl">Budgeted Units</div>
<div class="rc" style="left:355px;width:83px;padding-right:4px;direction:rtl">4000.00h</div>
<div class="rh R" style="left:438px;width:85px;padding-right:3px;direction:rtl">Actual Units</div>
<div class="rc" style="left:438px;width:85px;padding-right:4px;direction:rtl">3000.00h</div>
<div class="rh R" style="left:523px;width:86px;padding-right:3px;direction:rtl">Remaining Units</div>
<div class="rc" style="left:523px;width:86px;padding-right:4px;direction:rtl">1000.00h</div>
<div class="rh R" style="left:609px;width:117px;padding-right:3px;direction:rtl">At Completion Units</div>
<div class="rc" style="left:609px;width:117px;padding-right:4px;direction:rtl">4000.00h</div>
<div class="rh R" style="left:726px;width:78px;padding-right:0px;direction:rtl">Budgeted Cost</div>
<div class="rc" style="left:726px;width:78px;padding-right:0px;direction:rtl">$4,000.00</div>
<div class="rh R" style="left:804px;width:78px;padding-right:3px;direction:rtl">Actual Cost</div>
<div class="rc" style="left:804px;width:78px;padding-right:4px;direction:rtl">$2,400.00</div>
<div class="rh R" style="left:882px;width:98px;padding-right:3px;direction:rtl">Remaining Cost</div>
<div class="rc" style="left:882px;width:98px;padding-right:4px;direction:rtl">$1,600.00</div>
<div class="rh R" style="left:980px;width:100px;padding-right:0px;direction:rtl">At Completion Cost</div>
<div class="rc" style="left:980px;width:100px;padding-right:0px;direction:rtl">$4,000.00</div>
<div class="rh" style="left:1080px;width:138px;text-align:center;font-size:10.85px !important">Calculate costs from units</div>
<svg class="abs" style="left:13px;top:504px" width="15" height="17" viewBox="0 0 15 17">
<path d="M0.5 16 C0.5 11.5 2.8 10 6.3 10 C9.8 10 12 11.5 12 16 Z" fill="#2c8a9a"/>
<path d="M0.5 15.6 h11.5 v1.4 h-11.5z" fill="#1b3c94"/>
<circle cx="6.3" cy="6" r="4" fill="#dba972"/>
<path d="M2 6 C1.6 0.6 11 0.6 10.6 6 C9.4 3.6 3.4 3.6 2 6Z" fill="#4a2f1c"/>
<path d="M11 10 l1.1 2.3 2.6.3 -1.9 1.8 .5 2.5 -2.3-1.2 -2.3 1.2 .5-2.5 -1.9-1.8 2.6-.3z" fill="#fff033"/>
</svg>
<div class="abs" style="left:1143px;top:506px;width:13px;height:13px;background:#fff;border:2px solid;border-color:#5a5a5a #e6e6e6 #e6e6e6 #5a5a5a"></div>
<svg class="abs" style="left:1149px;top:513px" width="14" height="22" viewBox="0 0 14 22"><path d="M1 1 V17 L4.8 13.4 L7.6 20 L10 19 L7.2 12.6 H12.4 Z" fill="#fff" stroke="#000" stroke-width="1"/></svg>
</div>
<div class="red" style="left:836px;top:200px;width:86px;height:31px"></div>
<div class="red" style="left:437px;top:483px;width:86px;height:52px"></div>
<div class="red" style="left:802px;top:483px;width:82px;height:52px"></div>
<div class="red" style="left:1075px;top:483px;width:142px;height:52px"></div>
<div class="abs" style="left:0;top:558px;width:1755px;height:2px;background:#000"></div>
<div class="abs" style="left:1754px;top:406px;width:1px;height:154px;background:#000"></div>
</body></html>
